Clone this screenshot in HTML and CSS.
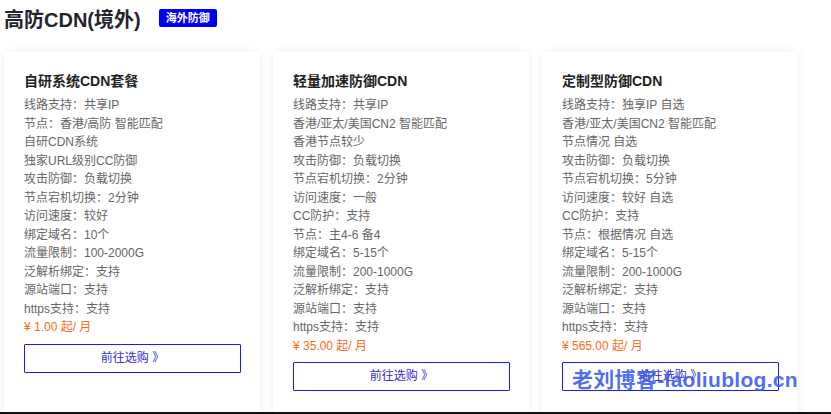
FILE: index.html
```html
<!DOCTYPE html>
<html lang="zh-CN">
<head>
  <meta charset="UTF-8" />
  <meta name="viewport" content="width=device-width, initial-scale=1.0"/>
  <title>高防CDN(境外)</title>
  <link rel="stylesheet" href="styles.css">
</head>
<body>
  <div class="page">
    <div class="header">
      <h1>高防CDN(境外)</h1>
      <span class="badge">海外防御</span>
    </div>

    <div class="plans">
      <div class="card">
        <h2>自研系统CDN套餐</h2>
        <ul>
          <li>线路支持：共享IP</li>
          <li>节点：香港/高防 智能匹配</li>
          <li>自研CDN系统</li>
          <li>独家URL级别CC防御</li>
          <li>攻击防御：负载切换</li>
          <li>节点宕机切换：2分钟</li>
          <li>访问速度：较好</li>
          <li>绑定域名：10个</li>
          <li>流量限制：100-2000G</li>
          <li>泛解析绑定：支持</li>
          <li>源站端口：支持</li>
          <li>https支持：支持</li>
        </ul>
        <div class="price">¥ 1.00 起/ 月</div>
        <a class="buy" href="#">前往选购 》</a>
      </div>

      <div class="card">
        <h2>轻量加速防御CDN</h2>
        <ul>
          <li>线路支持：共享IP</li>
          <li>香港/亚太/美国CN2 智能匹配</li>
          <li>香港节点较少</li>
          <li>攻击防御：负载切换</li>
          <li>节点宕机切换：2分钟</li>
          <li>访问速度：一般</li>
          <li>CC防护：支持</li>
          <li>节点：主4-6 备4</li>
          <li>绑定域名：5-15个</li>
          <li>流量限制：200-1000G</li>
          <li>泛解析绑定：支持</li>
          <li>源站端口：支持</li>
          <li>https支持：支持</li>
        </ul>
        <div class="price">¥ 35.00 起/ 月</div>
        <a class="buy" href="#">前往选购 》</a>
      </div>

      <div class="card">
        <h2>定制型防御CDN</h2>
        <ul>
          <li>线路支持：独享IP 自选</li>
          <li>香港/亚太/美国CN2 智能匹配</li>
          <li>节点情况 自选</li>
          <li>攻击防御：负载切换</li>
          <li>节点宕机切换：5分钟</li>
          <li>访问速度：较好 自选</li>
          <li>CC防护：支持</li>
          <li>节点：根据情况 自选</li>
          <li>绑定域名：5-15个</li>
          <li>流量限制：200-1000G</li>
          <li>泛解析绑定：支持</li>
          <li>源站端口：支持</li>
          <li>https支持：支持</li>
        </ul>
        <div class="price">¥ 565.00 起/ 月</div>
        <a class="buy" href="#">前往选购 》</a>
      </div>
    </div>

    <div class="watermark">老刘博客-laoliublog.cn</div>
  </div>
</body>
</html>
```

FILE: styles.css
```css
body {
  margin: 0;
  background: #fff;
  font-family: "Liberation Sans", "Noto Sans CJK SC", sans-serif;
}

.page {
  position: relative;
  height: 412px;
  overflow: hidden;
  border-bottom: 2px solid #111;
  padding: 0 4px;
}

.header {
  display: flex;
  align-items: center;
  height: 38px;
}

h1 {
  margin: 0 0 2px 0;
  font-size: 20px;
  font-weight: bold;
  color: #24242e;
}

.badge {
  margin-left: 18px;
  margin-bottom: 2px;
  background: #0000f5;
  color: #fff;
  font-size: 11px;
  font-weight: bold;
  padding: 2px 7px;
  line-height: 14px;
  border-radius: 2px;
}

.plans {
  display: grid;
  grid-template-columns: repeat(3, 256px);
  gap: 13px;
  margin-top: 14px;
}

.card {
  background: #fff;
  padding: 20px 19px 40px 20px;
  border-radius: 3px;
  box-shadow: 0 0 10px rgba(0, 0, 0, 0.07);
}

.card h2 {
  margin: 0 0 6px 0;
  font-size: 14px;
  line-height: 18px;
  font-weight: bold;
  color: #222;
}

.card ul {
  list-style: none;
  margin: 0;
  padding: 0;
}

.card li {
  font-size: 12px;
  line-height: 18.5px;
  color: #666;
}

.price {
  font-size: 12px;
  line-height: 18.5px;
  color: #ff6a1a;
}

.buy {
  display: block;
  margin-top: 7px;
  height: 27px;
  line-height: 27px;
  border: 1px solid #1a1aff;
  border-radius: 1px;
  text-align: center;
  font-size: 12px;
  color: #3030d0;
  text-decoration: none;
}

.watermark {
  position: absolute;
  left: 572px;
  top: 363px;
  font-size: 21px;
  font-weight: bold;
  color: rgba(55, 90, 235, 0.88);
  letter-spacing: 0.3px;
}
```
